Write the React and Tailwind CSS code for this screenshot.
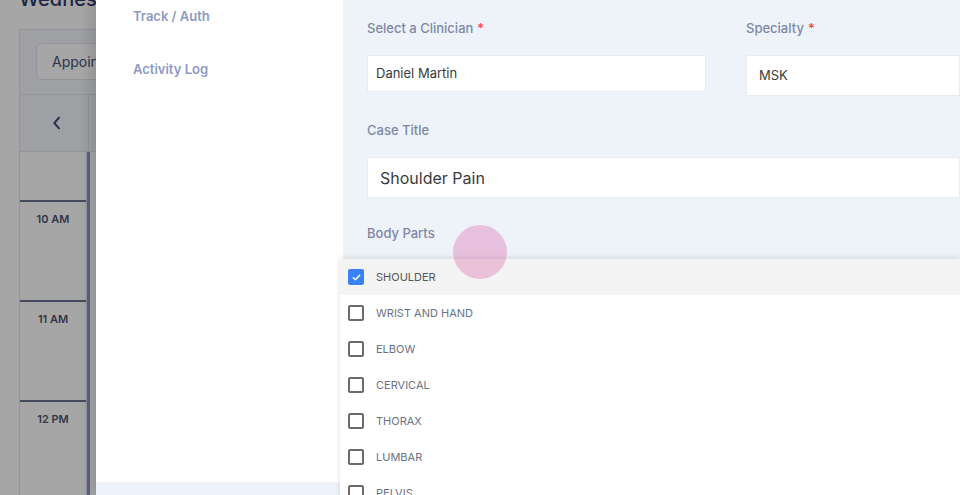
import React from 'react';

const bodyParts = ['Shoulder', 'Wrist and Hand', 'Elbow', 'Cervical', 'Thorax', 'Lumbar', 'Pelvis'];

const hours = ['10 AM', '11 AM', '12 PM'];

const Label = ({ children, required }) => (
  <div className="text-[13px] font-medium text-[#7e88a6] leading-none">
    {children}
    {required && <span className="text-[#ef4444] ml-1">*</span>}
  </div>
);

const Checkbox = ({ checked }) =>
  checked ? (
    <span className="w-4 h-4 rounded-[2px] bg-[#3b82f6] flex items-center justify-center shrink-0">
      <svg width="11" height="11" viewBox="0 0 12 12" fill="none">
        <path d="M2.5 6.2l2.3 2.3 4.7-5" stroke="white" strokeWidth="1.6" strokeLinecap="round" strokeLinejoin="round" />
      </svg>
    </span>
  ) : (
    <span className="w-4 h-4 rounded-[2px] border-2 border-[#6b6b6b] shrink-0" />
  );

const Background = () => (
  <div className="w-full h-full bg-white pl-[19px] flex flex-col">
    <div className="h-[29px] shrink-0">
      <div className="-mt-[11px] text-[20px] font-medium text-[#2e3a66] leading-none">Wednesday</div>
    </div>
    <div className="flex-1 border border-[#dfe4ee] bg-[#f3f6fb] flex flex-col">
      <div className="h-[65px] px-[16px] pt-[13px] border-b border-[#dfe4ee]">
        <div className="h-[37px] w-[200px] bg-white border border-[#dfe4ee] rounded-md flex items-center px-[15px] text-[14px] text-[#4a5276]">
          Appointments
        </div>
      </div>
      <div className="h-[57px] flex border-b border-[#dfe4ee]">
        <div className="w-[69px] flex items-center justify-center pl-[6px] border-r border-[#dfe4ee] text-[#3e4a7a]">
          <svg width="16" height="18" viewBox="0 0 24 24" fill="none" stroke="currentColor" strokeWidth="3" strokeLinecap="round" strokeLinejoin="round">
            <path d="M15 4l-7 8 7 8" />
          </svg>
        </div>
      </div>
      <div className="flex flex-1">
        <div className="w-[67px] bg-white flex flex-col border-r border-[#dfe4ee]">
          <div className="h-[50px] border-b-2 border-[#6a7291]" />
          {hours.map((h) => (
            <div key={h} className="h-[100px] border-b-2 border-[#6a7291] pt-[9px] text-center text-[11px] font-semibold text-[#4c5470]">
              {h}
            </div>
          ))}
        </div>
        <div className="w-[3px] bg-[#8e93d0]" />
        <div className="flex-1 bg-white" />
      </div>
    </div>
  </div>
);

export default function App() {
  return (
    <div className="w-[960px] h-[495px] relative overflow-hidden" style={{ fontFamily: 'Inter, "Open Sans", sans-serif' }}>
      <Background />
      <div className="absolute inset-0 bg-black/35" />

      <div className="absolute top-0 bottom-0 left-[96px] right-0 flex shadow-[-6px_0_12px_rgba(0,0,0,0.12)]">
        {/* side nav */}
        <div className="w-[247px] bg-white flex flex-col">
          <div className="flex-1 flex flex-col pl-[37px]">
            <div className="h-[34px] flex items-center text-[13px] font-semibold text-[#8e9ac4]">Track / Auth</div>
            <div className="h-[19px]" />
            <div className="h-[34px] flex items-center text-[13px] font-semibold text-[#8e9ac4]">Activity Log</div>
          </div>
          <div className="h-[13px] bg-[#eef3fb]" />
        </div>

        {/* form */}
        <div className="flex-1 bg-[#eef3fa] pl-[24px] relative">
          <div className="flex gap-[40px] pt-[22px]">
            <div className="w-[339px] flex flex-col">
              <Label required>Select a Clinician</Label>
              <div className="mt-[20px] h-[37px] bg-white border border-[#e6ebf3] flex items-center px-[8px] text-[13px] text-[#3b3b3b]">
                Daniel Martin
              </div>
            </div>
            <div className="flex-1 flex flex-col">
              <Label required>Specialty</Label>
              <div className="mt-[20px] h-[41px] bg-white border border-[#e6ebf3] flex items-center px-[12px] text-[13px] text-[#3b3b3b]">
                MSK
              </div>
            </div>
          </div>

          <div className="mt-[28px]">
            <Label>Case Title</Label>
            <div className="mt-[20px] h-[41px] bg-white border border-[#e6ebf3] flex items-center px-[12px] text-[16px] text-[#3b3b3b]">
              Shoulder Pain
            </div>
          </div>

          <div className="mt-[29px]">
            <Label>Body Parts</Label>
          </div>

          {/* dropdown menu */}
          <div className="absolute left-[-3px] top-[259px] right-0 bg-white shadow-[0_-1px_6px_rgba(0,0,0,0.12)] flex flex-col">
            {bodyParts.map((p, i) => (
              <div
                key={p}
                className={`h-[36px] flex items-center gap-[12px] pl-[8px] text-[11px] uppercase text-[#6b7280] ${i === 0 ? 'bg-[#f4f4f4] text-[#555]' : ''}`}
              >
                <Checkbox checked={i === 0} />
                {p}
              </div>
            ))}
          </div>
        </div>
      </div>

      {/* touch indicator */}
      <div className="absolute left-[453px] top-[225px] w-[54px] h-[54px] rounded-full bg-[rgba(218,110,170,0.38)]" />
    </div>
  );
}
